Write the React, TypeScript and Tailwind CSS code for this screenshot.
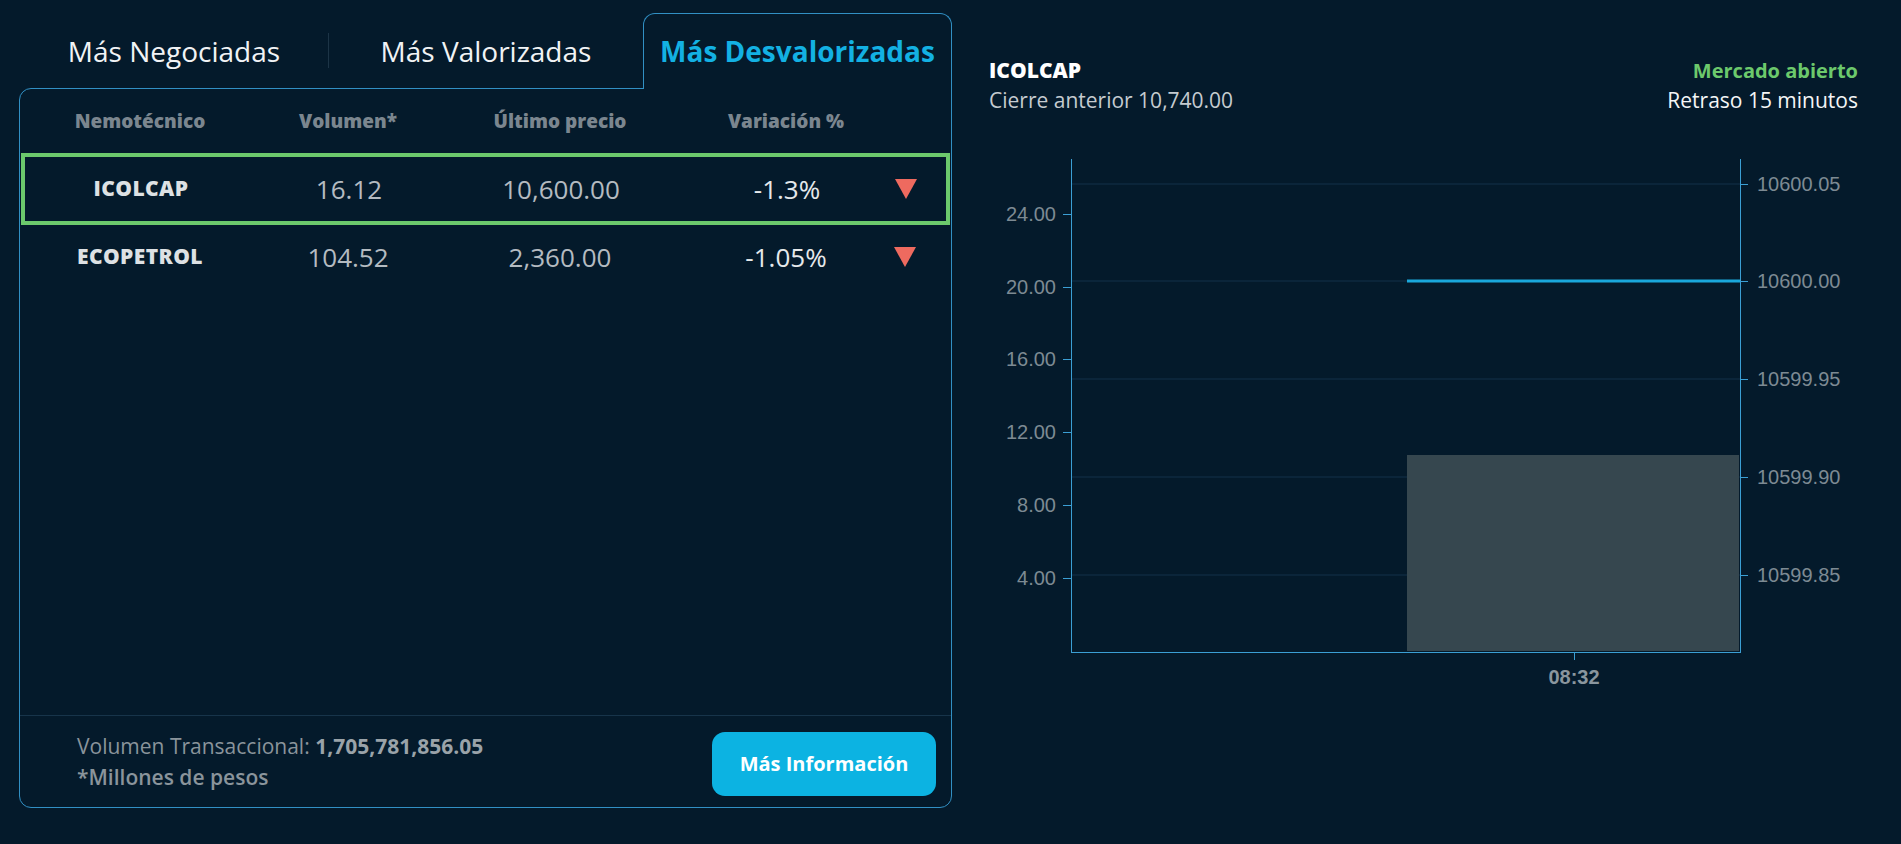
import React from "react";

const rows = [
  { name: "ICOLCAP", volume: "16.12", price: "10,600.00", change: "-1.3%", selected: true },
  { name: "ECOPETROL", volume: "104.52", price: "2,360.00", change: "-1.05%", selected: false },
];

const cols = "grid grid-cols-[240px_176px_248px_204px_34px] items-center text-center";

const DownArrow = () => (
  <svg width="24" height="20" viewBox="0 0 24 20" className="mx-auto">
    <polygon points="1,0 23,0 12,20" fill="#ee6a5f" />
  </svg>
);

const Tabs = () => (
  <div className="flex h-[75px] items-end text-[28px]">
    <div className="relative flex h-[75px] w-[310px] items-center justify-center text-[#f1f3f5]">
      Más Negociadas
      <span className="absolute right-0 top-[20px] h-[35px] w-px bg-[#1c3446]" />
    </div>
    <div className="flex h-[75px] w-[314px] items-center justify-center text-[#f1f3f5]">
      Más Valorizadas
    </div>
    <div className="relative z-10 -mb-px flex h-[76px] w-[309px] items-center justify-center rounded-t-xl border border-b-0 border-[#3190c4] bg-[#041a2b] pb-px font-bold text-[#13b1e3]">
      Más Desvalorizadas
    </div>
  </div>
);

const Table = () => (
  <div className="flex h-[720px] flex-col rounded-xl rounded-tr-none border border-[#3190c4]">
    <div className={`${cols} h-16 text-[19px] font-extrabold text-[#7b868f]`}>
      <span>Nemotécnico</span>
      <span>Volumen*</span>
      <span>Último precio</span>
      <span>Variación %</span>
      <span />
    </div>
    {rows.map((r) => (
      <div
        key={r.name}
        className={`${cols} ${r.selected ? "mx-px h-[72px] ring-4 ring-inset ring-[#6cc96c]" : "h-16"}`}
      >
        <span className="text-[21px] font-extrabold tracking-[0.02em] text-[#dde1e4]">{r.name}</span>
        <span className="text-[26px] text-[#b4bbc1]">{r.volume}</span>
        <span className="text-[26px] text-[#b4bbc1]">{r.price}</span>
        <span className="text-[26px] text-[#e6e9eb]">{r.change}</span>
        <DownArrow />
      </div>
    ))}
    <div className="flex-1" />
    <div className="flex h-[92px] items-center justify-between border-t border-[#17344a] pl-[57px] pr-[15px]">
      <div className="text-[21px] leading-[31px] text-[#8a949b]">
        <div>
          Volumen Transaccional: <span className="font-bold text-[#9aa3a9]">1,705,781,856.05</span>
        </div>
        <div className="font-semibold">*Millones de pesos</div>
      </div>
      <button className="mt-1 h-16 w-[224px] rounded-[13px] bg-[#0cb3e2] text-[20px] font-bold text-white">
        Más Información
      </button>
    </div>
  </div>
);

const leftTicks = [
  { y: 84, label: "24.00" },
  { y: 157, label: "20.00" },
  { y: 229, label: "16.00" },
  { y: 302, label: "12.00" },
  { y: 375, label: "8.00" },
  { y: 448, label: "4.00" },
];

const rightTicks = [
  { y: 54, label: "10600.05" },
  { y: 151, label: "10600.00" },
  { y: 249, label: "10599.95" },
  { y: 347, label: "10599.90" },
  { y: 445, label: "10599.85" },
];

const Chart = () => (
  <svg width="869" height="560" viewBox="0 0 869 560" className="mt-[15px] block">
    {rightTicks.map((t) => (
      <line key={t.label} x1="82" x2="752" y1={t.y} y2={t.y} stroke="#13304a" strokeWidth="1" />
    ))}
    <rect x="418" y="325" width="332" height="196" fill="#36474f" />
    <line x1="418" x2="752" y1="151" y2="151" stroke="#1aa8dc" strokeWidth="3" />
    <g stroke="#3b9fd4" strokeWidth="1">
      <line x1="82.5" x2="82.5" y1="29" y2="522" />
      <line x1="751.5" x2="751.5" y1="29" y2="522" />
      <line x1="82" x2="752" y1="522.5" y2="522.5" />
      <line x1="585.5" x2="585.5" y1="522" y2="530" />
      {leftTicks.map((t) => (
        <line key={t.label} x1="74" x2="82" y1={t.y + 0.5} y2={t.y + 0.5} />
      ))}
      {rightTicks.map((t) => (
        <line key={t.label} x1="752" x2="759" y1={t.y + 0.5} y2={t.y + 0.5} />
      ))}
    </g>
    <g fill="#7d8a93" fontFamily="'Liberation Sans', Arial, sans-serif" fontSize="20">
      {leftTicks.map((t) => (
        <text key={t.label} x="67" y={t.y + 7} textAnchor="end">
          {t.label}
        </text>
      ))}
      {rightTicks.map((t) => (
        <text key={t.label} x="768" y={t.y + 7}>
          {t.label}
        </text>
      ))}
      <text x="585" y="554" textAnchor="middle" fontWeight="bold" fontSize="20" fill="#8a969e">
        08:32
      </text>
    </g>
  </svg>
);

const Quote = () => (
  <div className="ml-[37px] w-[869px]">
    <div className="mt-[43px] flex justify-between">
      <div>
        <div className="text-[21px] font-extrabold leading-[29px] text-white">ICOLCAP</div>
        <div className="text-[21px] leading-[30px] text-[#c5cbd0]">Cierre anterior 10,740.00</div>
      </div>
      <div className="text-right">
        <div className="text-[20px] font-bold leading-[29px] text-[#6cc96c]">Mercado abierto</div>
        <div className="text-[21px] leading-[30px] text-[#f4f6f7]">Retraso 15 minutos</div>
      </div>
    </div>
    <Chart />
  </div>
);

export default function App() {
  return (
    <div className="min-h-[844px] w-full bg-[#041a2b] font-['Open_Sans',sans-serif]">
      <div className="flex pl-[19px] pt-[13px]">
        <div className="w-[933px]">
          <Tabs />
          <Table />
        </div>
        <Quote />
      </div>
    </div>
  );
}
